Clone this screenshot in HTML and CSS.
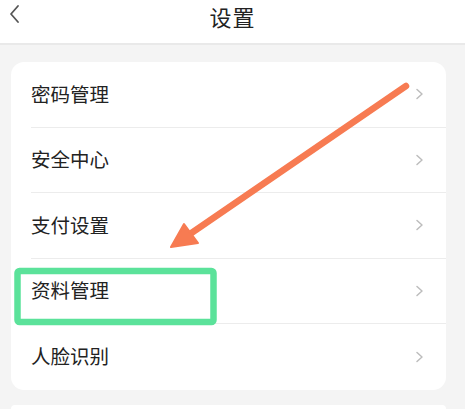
FILE: index.html
```html
<!DOCTYPE html>
<html lang="zh-CN">
<head>
<meta charset="utf-8">
<title>设置</title>
<link rel="stylesheet" href="styles.css">
</head>
<body>
<div class="page">
  <header class="topbar">
    <svg class="back" width="14" height="20" viewBox="0 0 14 20"><polyline points="10,2 3,10 10,18" fill="none" stroke="#555" stroke-width="1.8" stroke-linecap="round" stroke-linejoin="round"/></svg>
    <h1 class="title">设置</h1>
  </header>
  <main class="content">
    <section class="card">
      <div class="row"><span class="label">密码管理</span><span class="chev"><svg width="9" height="12" viewBox="0 0 9 12"><polyline points="2,1.5 7,6 2,10.5" fill="none" stroke="#bdbdbd" stroke-width="1.5" stroke-linecap="round" stroke-linejoin="round"/></svg></span></div>
      <div class="row"><span class="label">安全中心</span><span class="chev"><svg width="9" height="12" viewBox="0 0 9 12"><polyline points="2,1.5 7,6 2,10.5" fill="none" stroke="#bdbdbd" stroke-width="1.5" stroke-linecap="round" stroke-linejoin="round"/></svg></span></div>
      <div class="row"><span class="label">支付设置</span><span class="chev"><svg width="9" height="12" viewBox="0 0 9 12"><polyline points="2,1.5 7,6 2,10.5" fill="none" stroke="#bdbdbd" stroke-width="1.5" stroke-linecap="round" stroke-linejoin="round"/></svg></span></div>
      <div class="row"><span class="label">资料管理</span><span class="chev"><svg width="9" height="12" viewBox="0 0 9 12"><polyline points="2,1.5 7,6 2,10.5" fill="none" stroke="#bdbdbd" stroke-width="1.5" stroke-linecap="round" stroke-linejoin="round"/></svg></span></div>
      <div class="row last"><span class="label">人脸识别</span><span class="chev"><svg width="9" height="12" viewBox="0 0 9 12"><polyline points="2,1.5 7,6 2,10.5" fill="none" stroke="#bdbdbd" stroke-width="1.5" stroke-linecap="round" stroke-linejoin="round"/></svg></span></div>
    </section>
    <section class="card next"></section>
  </main>
  <svg class="annot" width="465" height="409" viewBox="0 0 465 409">
    <rect x="17.5" y="271" width="196" height="51" rx="2" fill="none" stroke="#5be29a" stroke-width="6.5"/>
    <line x1="406" y1="86" x2="190" y2="234" stroke="#f77b52" stroke-width="6.5" stroke-linecap="round"/>
    <polygon points="171,247 184,224 198,243" fill="#f77b52" stroke="#f77b52" stroke-width="2" stroke-linejoin="round"/>
  </svg>
</div>
</body>
</html>
```
FILE: styles.css
```css
* { box-sizing: border-box; }
html, body { margin: 0; padding: 0; }
body {
  width: 465px;
  height: 409px;
  overflow: hidden;
  background: #f4f4f4;
  font-family: "Noto Sans CJK SC", "Noto Sans", sans-serif;
  color: #222;
}
.page { position: relative; width: 465px; height: 409px; overflow: hidden; }
.topbar {
  height: 45px;
  background: #fff;
  border-bottom: 2px solid #e9e9e9;
  display: flex;
  align-items: flex-start;
  justify-content: center;
  padding-top: 3px;
  position: relative;
}
.back { position: absolute; left: 8px; top: 4px; }
.title {
  margin: 0;
  font-size: 22px;
  line-height: 26px;
  font-weight: 400;
  color: #222;
  letter-spacing: 1px;
}
.content { padding: 17px 19px 0 11px; display: flex; flex-direction: column; gap: 15px; }
.card {
  background: #fff;
  border-radius: 13px;
  padding-left: 20px;
}
.row {
  height: 65.5px;
  display: flex;
  align-items: center;
  justify-content: space-between;
  border-bottom: 1px solid #ececec;
  padding-right: 22px;
}
.row.last { border-bottom: none; }
.label { font-size: 19.5px; line-height: 1; margin-top: -2px; }
.chev { display: flex; }
.next { height: 4px; border-radius: 13px 13px 0 0; }
.annot { position: absolute; left: 0; top: 0; pointer-events: none; }
```
